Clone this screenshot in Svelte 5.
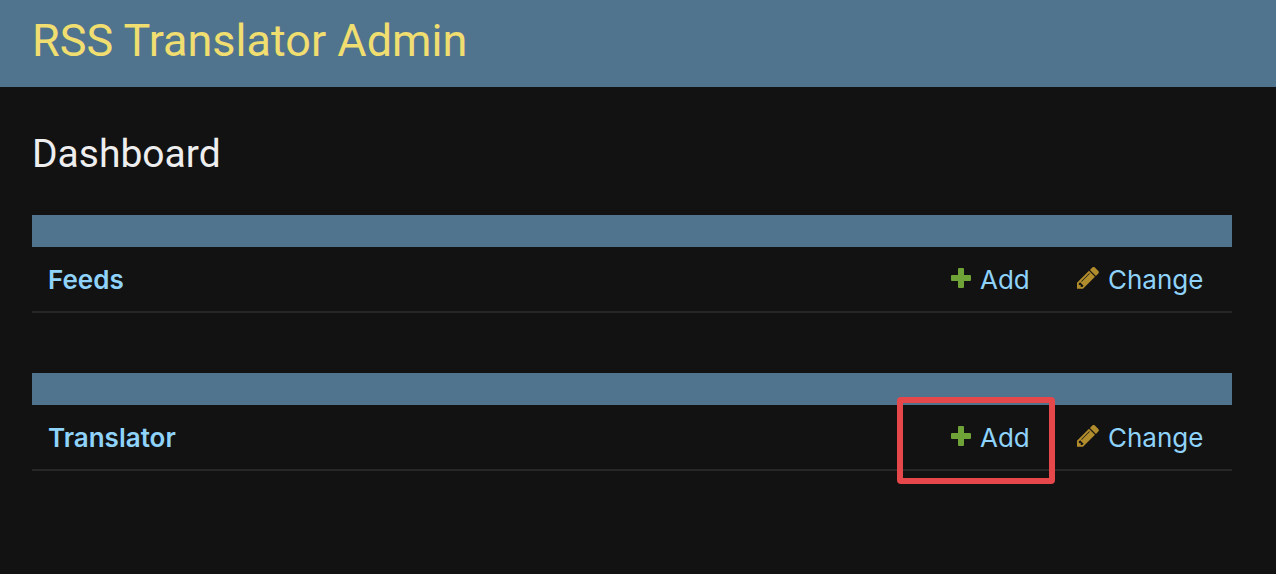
<script>
  const models = ['Feeds', 'Translator'];
</script>

<header><a href="#home">RSS Translator Admin</a></header>
<main>
  <h1>Dashboard</h1>
  {#each models as name, i}
    <section>
      <div class="caption"></div>
      <table>
        <tbody>
          <tr>
            <th scope="row"><a href="#{name}">{name}</a></th>
            <td class="add">
              <a href="#{name}-add">
                <svg width="22" height="22" viewBox="0 0 22 22" aria-hidden="true"><path fill="#70a337" d="M9 0h4q1 0 1 1v6h6q1 0 1 1v4q0 1-1 1h-6v6q0 1-1 1H9q-1 0-1-1v-6H2q-1 0-1-1V8q0-1 1-1h6V1q0-1 1-1z" /></svg>Add
              </a>
              {#if i === 1}<span class="highlight"></span>{/if}
            </td>
            <td class="change">
              <a href="#{name}-change">
                <svg width="24" height="24" viewBox="60 152 1664 1664" aria-hidden="true"><path fill="#b18c2d" d="M491 1536l91-91-235-235-91 91v107h128v128h107zm523-928q0-22-22-22-10 0-17 7l-542 542q-7 7-7 17 0 22 22 22 10 0 17-7l542-542q7-7 7-17zm-54-192l416 416-832 832h-416v-416zm683 96q0 53-37 90l-166 166-416-416 166-165q36-38 90-38 53 0 91 38l235 234q37 39 37 91z" /></svg>Change
              </a>
            </td>
          </tr>
        </tbody>
      </table>
    </section>
  {/each}
</main>

<style>
  :global(body) {
    margin: 0;
    background: #121212;
    font-family: Inter, "Liberation Sans", sans-serif;
  }
  a { color: #8fd3fa; text-decoration: none; }
  header {
    padding: 9px 32px 14px;
    background: #50748e;
    font-family: Roboto, sans-serif;
    font-size: 45px;
    font-weight: 400;
    line-height: 64px;
  }
  header a { color: #f0de70; }
  main { padding: 42px 44px 40px 32px; }
  h1 {
    margin: 0 0 36px;
    color: #eee;
    font-family: Roboto, sans-serif;
    font-size: 39px;
    font-weight: 400;
    line-height: 50px;
  }
  section { margin-bottom: 60px; }
  .caption { height: 32px; background: #50748e; }
  table { width: 100%; border-collapse: collapse; }
  th, td {
    height: 62px;
    padding: 2px 16px 0;
    border-bottom: 2px solid #272727;
    font-size: 26px;
    line-height: 32px;
    text-align: left;
  }
  th { font-weight: 600; }
  td { font-weight: 400; white-space: nowrap; }
  td a { display: flex; align-items: center; gap: 8px; }
  td svg { flex: none; margin-bottom: 2px; }
  .add { position: relative; width: 94px; }
  .change { width: 140px; }
  .highlight {
    position: absolute;
    inset: -8px 5px -15px -37px;
    border: 6px solid #e6474b;
    border-radius: 4px;
    pointer-events: none;
  }
</style>
